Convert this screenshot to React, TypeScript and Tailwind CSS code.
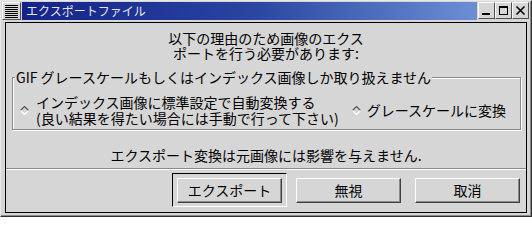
import React from "react";

const FONT = "font-['Noto_Sans_CJK_JP','Noto_Sans',sans-serif]";

function Diamond() {
  return (
    <svg width="9" height="9" viewBox="0 0 9 9" className="shrink-0">
      <polygon points="4.5,0.5 8.5,4.5 4.5,8.5 0.5,4.5" fill="#d6d6d6" />
      <polyline points="0.5,4.5 4.5,0.5 8.5,4.5" fill="none" stroke="#555555" strokeWidth="1.2" />
      <polyline points="0.5,4.5 4.5,8.5 8.5,4.5" fill="none" stroke="#ffffff" strokeWidth="1.2" />
    </svg>
  );
}

function WinButton({ kind }: { kind: "min" | "max" | "close" }) {
  return (
    <div className="w-[17px] h-[17px] bg-[#d6d6d6] border border-t-white border-l-white border-r-[#505050] border-b-[#505050] flex items-center justify-center">
      <svg width="11" height="11" viewBox="0 0 11 11">
        {kind === "min" && <rect x="1" y="8" width="8" height="2" fill="#000" />}
        {kind === "max" && (
          <>
            <rect x="1.5" y="1.5" width="8" height="8" fill="none" stroke="#000" />
            <rect x="1" y="1" width="9" height="2" fill="#000" />
          </>
        )}
        {kind === "close" && (
          <path d="M1.5 1.5 L9.5 9.5 M9.5 1.5 L1.5 9.5" stroke="#000" strokeWidth="1.6" />
        )}
      </svg>
    </div>
  );
}

function Btn({ label, w = "w-[105px]" }: { label: string; w?: string }) {
  return (
    <div
      className={`${w} h-[25px] bg-[#d6d6d6] border border-t-white border-l-white border-r-[#404040] border-b-[#404040] shadow-[inset_-1px_-1px_0_#8a8a8a] flex items-center justify-center text-[14px] leading-none text-black`}
    >
      {label}
    </div>
  );
}

export default function App() {
  return (
    <div className={`${FONT} w-[532px] h-[217px] bg-[#d6d6d6] border border-t-[#e8e8e8] border-l-[#e8e8e8] border-r-[#303030] border-b-[#303030] shadow-[inset_-1px_-1px_0_#8a8a8a] flex flex-col px-[1px] pt-[1px] overflow-hidden`}>
      {/* title bar */}
      <div className="flex h-[18px] items-stretch gap-[1px]">
        <div className="w-[19px] h-[18px] bg-[#d6d6d6] border border-t-white border-l-white border-r-[#505050] border-b-[#505050] flex items-center justify-center">
          <svg width="13" height="13" viewBox="0 0 13 13">
            {[0, 2, 4, 6, 8, 10, 12].map((y) => (
              <rect key={y} x="0" y={y} width="13" height="1" fill="#000" />
            ))}
          </svg>
        </div>
        <div className="flex-1 bg-gradient-to-r from-[#14238a] via-[#2a44a0] to-[#6c8fd4] flex items-center pl-[4px] text-[12px] leading-none text-[#e8e8e8]">
          エクスポートファイル
        </div>
        <div className="flex pr-[1px]">
          <WinButton kind="min" />
          <WinButton kind="max" />
          <WinButton kind="close" />
        </div>
      </div>

      {/* client area */}
      <div className="flex-1 mt-[2px] ml-[3px] mr-[3px] mb-[3px] border border-black flex flex-col text-black">
        <div className="pt-[8px] text-center text-[14px] leading-[15px]">
          <div>以下の理由のため画像のエクス</div>
          <div>ポートを行う必要があります:</div>
        </div>

        <fieldset className="mt-[9px] ml-[6px] mr-[5px] border border-[#8a8a8a] shadow-[inset_1px_1px_0_#fff,1px_1px_0_#fff] pb-[3px]">
          <legend className="ml-[2px] px-[1px] text-[14px] leading-[15px] bg-[#d6d6d6]">
            GIF グレースケールもしくはインデックス画像しか取り扱えません
          </legend>
          <div className="flex items-center pt-[9px] pl-[7px]">
            <Diamond />
            <div className="ml-[7px] text-[14px] leading-[16px]">
              <div>インデックス画像に標準設定で自動変換する</div>
              <div>(良い結果を得たい場合には手動で行って下さい)</div>
            </div>
            <div className="ml-[13px] flex items-center">
              <Diamond />
              <span className="ml-[6px] text-[14px] leading-[16px]">グレースケールに変換</span>
            </div>
          </div>
        </fieldset>

        <div className="mt-[17px] text-center text-[14px] leading-[16px]">
          エクスポート変換は元画像には影響を与えません.
        </div>

        <div className="mt-[5px] h-[2px] border-t border-t-[#8a8a8a] border-b border-b-white" />

        <div className="mt-[3px] flex items-center">
          <div className="ml-[166px] w-[115px] h-[34px] border border-t-black border-l-black border-r-white border-b-white flex items-center justify-center">
            <Btn label="エクスポート" w="w-[105px]" />
          </div>
          <div className="ml-[9px]">
            <Btn label="無視" />
          </div>
          <div className="ml-[14px]">
            <Btn label="取消" />
          </div>
        </div>
      </div>
    </div>
  );
}
